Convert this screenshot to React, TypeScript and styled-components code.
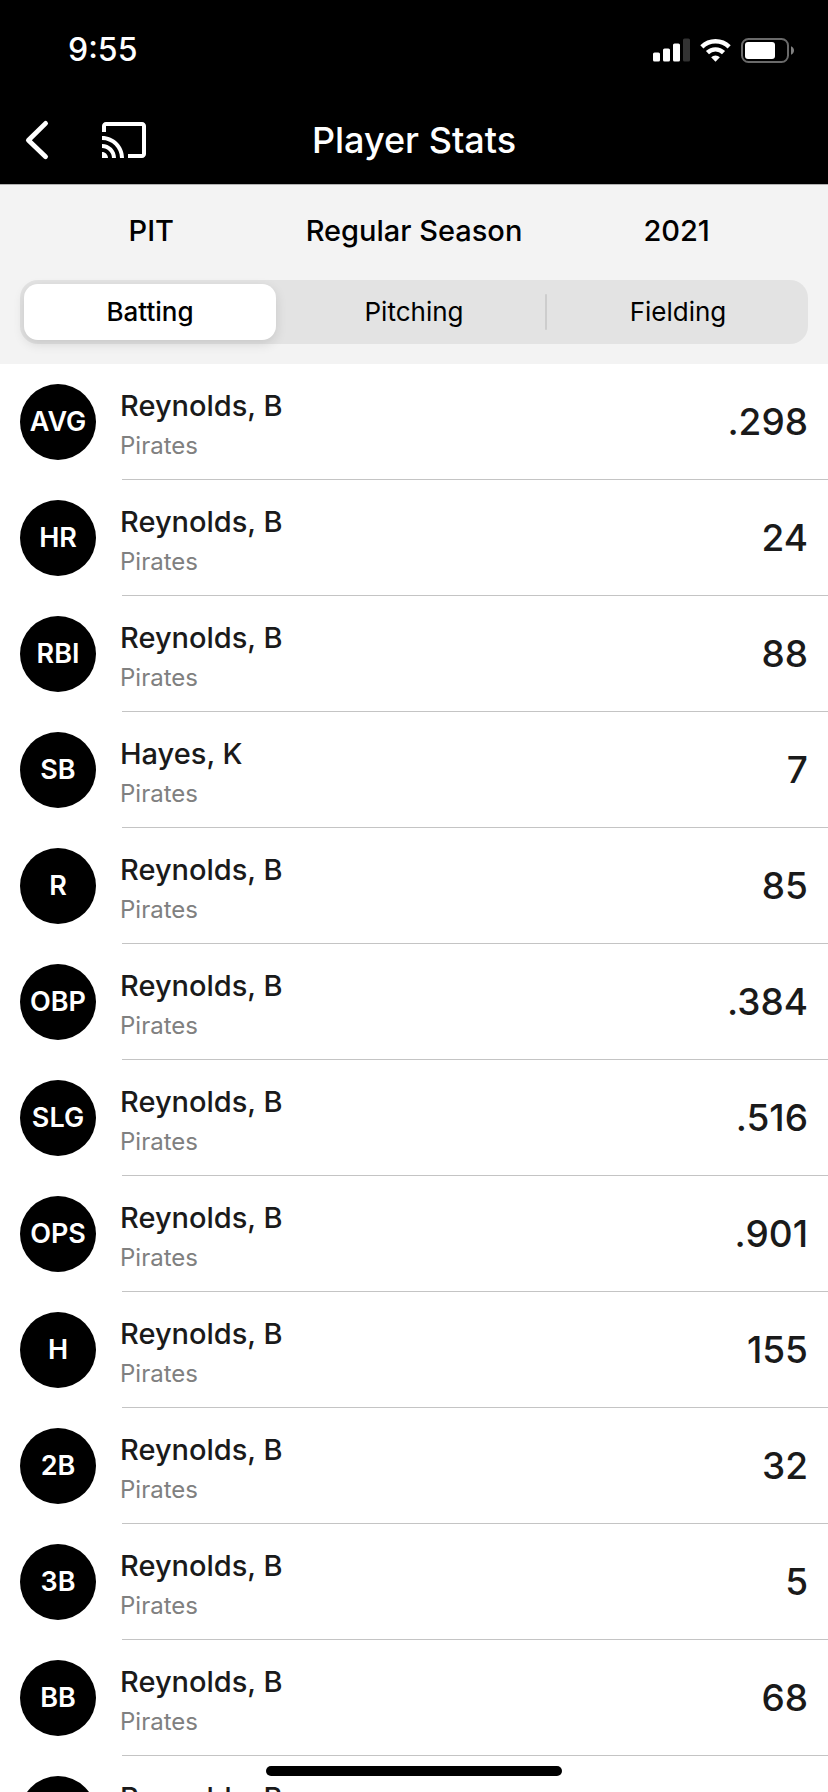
import React, { useState } from "react";
import styled, { createGlobalStyle } from "styled-components";

const GlobalStyle = createGlobalStyle`
  *, *::before, *::after { box-sizing: border-box; }
  body {
    margin: 0;
    background: #fff;
    color: #1a1a1a;
    font-family: Inter, "Liberation Sans", sans-serif;
  }
  button {
    border: 0;
    padding: 0;
    margin: 0;
    background: none;
    color: inherit;
    font: inherit;
    cursor: pointer;
  }
`;

const Screen = styled.div`
  display: flex;
  flex-direction: column;
  height: 100vh;
  overflow: hidden;
`;

const TopBar = styled.header`
  flex: none;
  background: #000;
  color: #fff;
  border-bottom: 1px solid #b0b0b0;
`;

const StatusBar = styled.div`
  display: flex;
  align-items: center;
  justify-content: space-between;
  height: 96px;
  padding: 4px 34px 0 68px;
`;

const Clock = styled.time`
  font-size: 32px;
  line-height: 40px;
  font-weight: 500;
`;

const StatusIcons = styled.div`
  display: flex;
  align-items: center;
  gap: 10px;

  svg { display: block; }
`;

const NavBar = styled.nav`
  display: grid;
  grid-template-columns: 1fr auto 1fr;
  align-items: center;
  height: 88px;
  padding: 0 20px;
`;

const NavActions = styled.div`
  display: flex;
  align-items: center;
  gap: 44px;
`;

const IconButton = styled.button`
  display: flex;
  align-items: center;
  justify-content: center;
`;

const Title = styled.h1`
  margin: 0;
  font-size: 36px;
  line-height: 44px;
  font-weight: 500;
`;

const Controls = styled.section`
  flex: none;
  display: flex;
  flex-direction: column;
  gap: 29px;
  padding: 26px 20px 20px;
  background: #f3f3f3;
  color: #000;
`;

const Filters = styled.div`
  display: grid;
  grid-template-columns: repeat(3, 1fr);
`;

const FilterButton = styled.button`
  font-size: 29px;
  line-height: 40px;
  font-weight: 500;
`;

const Segments = styled.div`
  display: flex;
  align-items: center;
  height: 64px;
  padding: 4px;
  border-radius: 18px;
  background: #e3e3e3;
`;

const Segment = styled.button<{ $active: boolean }>`
  flex: 1;
  height: 56px;
  border-radius: 14px;
  background: ${(p) => (p.$active ? "#fff" : "transparent")};
  box-shadow: ${(p) => (p.$active ? "0 4px 12px rgba(0, 0, 0, 0.12)" : "none")};
  font-size: 26px;
  line-height: 32px;
  font-weight: ${(p) => (p.$active ? 500 : 400)};
`;

const Divider = styled.span<{ $visible: boolean }>`
  flex: none;
  width: 2px;
  height: 36px;
  margin: 0 5px;
  border-radius: 1px;
  background: ${(p) => (p.$visible ? "#cdcdcd" : "transparent")};
`;

const List = styled.ul`
  flex: 1;
  min-height: 0;
  margin: 0;
  padding: 0;
  list-style: none;
  overflow-y: auto;
  scrollbar-width: none;
`;

const Row = styled.li`
  display: flex;
  align-items: stretch;
  gap: 24px;
  height: 116px;
  padding-left: 20px;
`;

const Badge = styled.span`
  flex: none;
  align-self: center;
  display: flex;
  align-items: center;
  justify-content: center;
  width: 76px;
  height: 76px;
  border-radius: 50%;
  background: #000;
  color: #fff;
  font-size: 27px;
  line-height: 32px;
  font-weight: 600;
`;

const RowBody = styled.div`
  position: relative;
  flex: 1;
  display: flex;
  align-items: center;
  justify-content: space-between;
  padding-right: 20px;

  &::after {
    content: "";
    position: absolute;
    left: 2px;
    right: 0;
    bottom: 0;
    height: 1px;
    background: #c4c4c4;
  }
`;

const Player = styled.div`
  display: flex;
  flex-direction: column;
  gap: 4px;
  padding-top: 4px;
`;

const PlayerName = styled.span`
  font-size: 29px;
  line-height: 40px;
  font-weight: 500;
`;

const Team = styled.span`
  font-size: 24px;
  line-height: 32px;
  color: #808080;
`;

const Value = styled.span`
  font-size: 37px;
  line-height: 48px;
  font-weight: 500;
`;

const HomeIndicator = styled.div`
  position: fixed;
  left: 50%;
  bottom: 16px;
  width: 296px;
  height: 10px;
  margin-left: -148px;
  border-radius: 5px;
  background: #000;
`;

type Leader = { stat: string; player: string; value: string };

const LEADERS: Leader[] = [
  { stat: "AVG", player: "Reynolds, B", value: ".298" },
  { stat: "HR", player: "Reynolds, B", value: "24" },
  { stat: "RBI", player: "Reynolds, B", value: "88" },
  { stat: "SB", player: "Hayes, K", value: "7" },
  { stat: "R", player: "Reynolds, B", value: "85" },
  { stat: "OBP", player: "Reynolds, B", value: ".384" },
  { stat: "SLG", player: "Reynolds, B", value: ".516" },
  { stat: "OPS", player: "Reynolds, B", value: ".901" },
  { stat: "H", player: "Reynolds, B", value: "155" },
  { stat: "2B", player: "Reynolds, B", value: "32" },
  { stat: "3B", player: "Reynolds, B", value: "5" },
  { stat: "BB", player: "Reynolds, B", value: "68" },
  { stat: "SO", player: "Reynolds, B", value: "113" },
];

const TABS = ["Batting", "Pitching", "Fielding"];

const SignalIcon = () => (
  <svg width="37" height="24" viewBox="0 0 37 24" fill="#fff" aria-hidden="true">
    <rect x="0" y="14.5" width="7" height="9" rx="1.6" />
    <rect x="10" y="10.5" width="7" height="13" rx="1.6" />
    <rect x="20" y="5.5" width="7" height="18" rx="1.6" />
    <rect x="30" y="0.5" width="7" height="23" rx="1.6" fill="#333" />
  </svg>
);

const WifiIcon = () => (
  <svg width="31" height="24" viewBox="0 0 32 24" fill="none" aria-hidden="true">
    <path d="M1.9 8.7a20.2 20.2 0 0 1 28.2 0" stroke="#fff" strokeWidth="4.6" />
    <path d="M7.7 14.7a12 12 0 0 1 16.6 0" stroke="#fff" strokeWidth="4.6" />
    <path d="M16 24l-4.5-4.6a6.6 6.6 0 0 1 9 0z" fill="#fff" />
  </svg>
);

const BatteryIcon = () => (
  <svg width="53" height="25" viewBox="0 0 53 25" aria-hidden="true">
    <rect x="1" y="1" width="46" height="23" rx="6.5" fill="none" stroke="#6a6a6a" strokeWidth="2" />
    <rect x="4" y="4" width="30" height="17" rx="3" fill="#fff" />
    <path d="M50 8.2c4 1.5 4 7.1 0 8.6z" fill="#808080" />
  </svg>
);

const BackIcon = () => (
  <svg width="36" height="48" viewBox="0 0 36 48" fill="none" aria-hidden="true">
    <path d="M25.6 7.4L8.4 24.3l17.2 16.4" stroke="#fff" strokeWidth="4.8" strokeLinecap="round" strokeLinejoin="round" />
  </svg>
);

const CastIcon = () => (
  <svg width="48" height="48" viewBox="0 0 24 24" fill="#fff" aria-hidden="true">
    <path d="M21 3H3c-1.1 0-2 .9-2 2v3h2V5h18v14h-7v2h7c1.1 0 2-.9 2-2V5c0-1.1-.9-2-2-2zM1 18v3h3c0-1.66-1.34-3-3-3zm0-4v2c2.76 0 5 2.24 5 5h2c0-3.87-3.13-7-7-7zm0-4v2c4.97 0 9 4.03 9 9h2c0-6.08-4.93-11-11-11z" />
  </svg>
);

export default function App() {
  const [active, setActive] = useState(0);

  return (
    <>
      <GlobalStyle />
      <Screen>
        <TopBar>
          <StatusBar>
            <Clock>9:55</Clock>
            <StatusIcons>
              <SignalIcon />
              <WifiIcon />
              <BatteryIcon />
            </StatusIcons>
          </StatusBar>
          <NavBar>
            <NavActions>
              <IconButton type="button" aria-label="Back">
                <BackIcon />
              </IconButton>
              <IconButton type="button" aria-label="Cast">
                <CastIcon />
              </IconButton>
            </NavActions>
            <Title>Player Stats</Title>
          </NavBar>
        </TopBar>

        <Controls>
          <Filters>
            <FilterButton type="button">PIT</FilterButton>
            <FilterButton type="button">Regular Season</FilterButton>
            <FilterButton type="button">2021</FilterButton>
          </Filters>
          <Segments role="tablist">
            {TABS.map((tab, i) => (
              <React.Fragment key={tab}>
                {i > 0 && <Divider $visible={active !== i && active !== i - 1} />}
                <Segment
                  type="button"
                  role="tab"
                  aria-selected={active === i}
                  $active={active === i}
                  onClick={() => setActive(i)}
                >
                  {tab}
                </Segment>
              </React.Fragment>
            ))}
          </Segments>
        </Controls>

        <List>
          {LEADERS.map(({ stat, player, value }) => (
            <Row key={stat}>
              <Badge>{stat}</Badge>
              <RowBody>
                <Player>
                  <PlayerName>{player}</PlayerName>
                  <Team>Pirates</Team>
                </Player>
                <Value>{value}</Value>
              </RowBody>
            </Row>
          ))}
        </List>
        <HomeIndicator />
      </Screen>
    </>
  );
}
